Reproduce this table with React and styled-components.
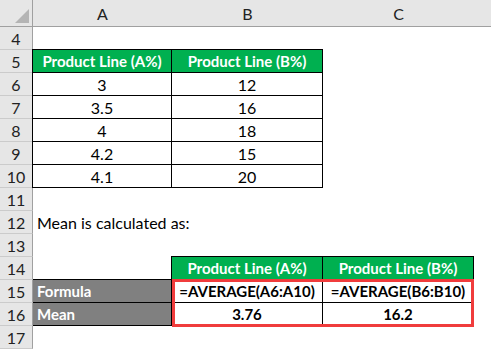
import React from "react";
import styled, { createGlobalStyle } from "styled-components";

const GlobalStyle = createGlobalStyle`
  html, body {
    margin: 0;
    padding: 0;
    background: #fff;
  }
  body {
    font-family: Lato, "Open Sans", "Liberation Sans", sans-serif;
  }
`;

const Sheet = styled.div`
  display: grid;
  grid-template-columns: 33px 139px 151px 151px 17px;
  grid-template-rows: 27px repeat(14, 23px);
  width: 491px;
  height: 350px;
  overflow: hidden;
  font-size: 16px;
  color: #000;
`;

const Corner = styled.div`
  grid-row: 1;
  grid-column: 1;
  background: #e6e6e6;
  border-right: 1px solid #a0a0a0;
  border-bottom: 1px solid #a0a0a0;
  box-sizing: border-box;
  position: relative;

  &::after {
    content: "";
    position: absolute;
    right: 3px;
    bottom: 3px;
    width: 0;
    height: 0;
    border-left: 14px solid transparent;
    border-bottom: 14px solid #b4b4b4;
  }
`;

const ColHead = styled.div`
  grid-row: 1;
  grid-column: ${(p) => p.$col};
  background: #e6e6e6;
  border-bottom: 1px solid #a0a0a0;
  box-sizing: border-box;
  display: flex;
  align-items: center;
  justify-content: center;
  color: #222;
  font-size: 16px;
  position: relative;
  padding-top: 1px;

  &::after {
    content: "";
    display: ${(p) => (p.$last ? "none" : "block")};
    position: absolute;
    right: -1px;
    top: 5px;
    bottom: 0;
    width: 1px;
    background: #b8b8b8;
  }
`;

const RowHead = styled.div`
  grid-row: ${(p) => p.$row};
  grid-column: 1;
  background: #e6e6e6;
  border-right: 1px solid #a0a0a0;
  border-bottom: 1px solid #cbcbcb;
  box-sizing: border-box;
  display: flex;
  align-items: center;
  justify-content: center;
  color: #222;
  font-size: 16px;
`;

const Cell = styled.div`
  grid-row: ${(p) => p.$row};
  grid-column: ${(p) => p.$col};
  box-sizing: border-box;
  display: flex;
  align-items: center;
  justify-content: ${(p) => (p.$align === "left" ? "flex-start" : "center")};
  padding: 0 4px;
  white-space: nowrap;
  background: ${(p) => p.$bg || "transparent"};
  color: ${(p) => p.$fg || "#000"};
  font-weight: ${(p) => (p.$bold ? 700 : 400)};
  font-size: ${(p) => (p.$bold ? "15px" : "16px")};
  border-right: ${(p) => (p.$boxed ? "1px solid #000" : "none")};
  border-bottom: ${(p) => (p.$boxed ? "1px solid #000" : "none")};
  border-left: ${(p) => (p.$left ? "1px solid #000" : "none")};
  border-top: ${(p) => (p.$top ? "1px solid #000" : "none")};
  margin-left: ${(p) => (p.$left ? "-1px" : "0")};
  margin-top: ${(p) => (p.$top ? "-1px" : "0")};
`;

const Highlight = styled.div`
  grid-row: 13 / 15;
  grid-column: 3 / 5;
  border: 3px solid #f03c3c;
  margin: -1px 0 -1px 0;
  pointer-events: none;
  z-index: 2;
`;

const GREEN = "#00b050";
const GRAY = "#808080";

const firstTable = [
  ["3", "12"],
  ["3.5", "16"],
  ["4", "18"],
  ["4.2", "15"],
  ["4.1", "20"],
];

export default function App() {
  const rows = [];
  for (let n = 4; n <= 17; n++) rows.push(n);

  return (
    <>
      <GlobalStyle />
      <Sheet>
        <Corner />
        <ColHead $col={2}>A</ColHead>
        <ColHead $col={3}>B</ColHead>
        <ColHead $col={4}>C</ColHead>
        <ColHead $col={5} $last />

        {rows.map((n) => (
          <RowHead key={n} $row={n - 2}>
            {n}
          </RowHead>
        ))}

        {/* first table, A5:B10 */}
        <Cell $row={3} $col={2} $bg={GREEN} $fg="#fff" $bold $boxed $left $top>
          Product Line (A%)
        </Cell>
        <Cell $row={3} $col={3} $bg={GREEN} $fg="#fff" $bold $boxed $top>
          Product Line (B%)
        </Cell>
        {firstTable.map((r, i) => (
          <React.Fragment key={i}>
            <Cell $row={4 + i} $col={2} $boxed $left>
              {r[0]}
            </Cell>
            <Cell $row={4 + i} $col={3} $boxed>
              {r[1]}
            </Cell>
          </React.Fragment>
        ))}

        <Cell $row={10} $col={2} $align="left">
          Mean is calculated as:
        </Cell>

        {/* second table */}
        <Cell $row={12} $col={3} $bg={GREEN} $fg="#fff" $bold $boxed $left $top>
          Product Line (A%)
        </Cell>
        <Cell $row={12} $col={4} $bg={GREEN} $fg="#fff" $bold $boxed $top>
          Product Line (B%)
        </Cell>

        <Cell $row={13} $col={2} $bg={GRAY} $fg="#fff" $bold $boxed $align="left" $top>
          Formula
        </Cell>
        <Cell $row={13} $col={3} $bold $boxed>
          =AVERAGE(A6:A10)
        </Cell>
        <Cell $row={13} $col={4} $bold $boxed>
          =AVERAGE(B6:B10)
        </Cell>

        <Cell $row={14} $col={2} $bg={GRAY} $fg="#fff" $bold $boxed $align="left">
          Mean
        </Cell>
        <Cell $row={14} $col={3} $bold $boxed>
          3.76
        </Cell>
        <Cell $row={14} $col={4} $bold $boxed>
          16.2
        </Cell>

        <Highlight />
      </Sheet>
    </>
  );
}
